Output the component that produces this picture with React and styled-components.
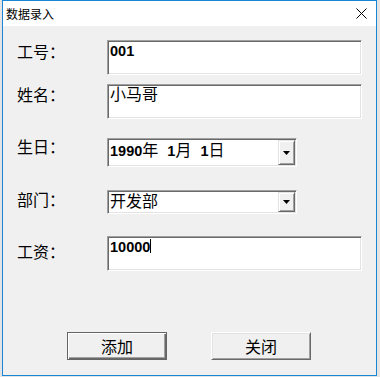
import React from 'react';
import styled, { createGlobalStyle } from 'styled-components';

const GlobalStyle = createGlobalStyle`
  html, body { margin: 0; padding: 0; background: #e4e4e4; }
  body { font-family: "Noto Sans CJK SC", sans-serif; color: #000; }
`;

const Window = styled.div`
  box-sizing: border-box;
  width: 375px;
  height: 376px;
  margin-left: 2px;
  border: 1px solid #1b84d5;
  display: flex;
  flex-direction: column;
  background: #f0f0f0;
`;

const TitleBar = styled.div`
  height: 25px;
  flex: none;
  background: #fff;
  display: flex;
  align-items: center;
  justify-content: space-between;
  padding: 0 9px 0 3px;
`;

const Title = styled.span`
  font-family: "Noto Sans CJK SC", sans-serif;
  font-size: 12px;
  line-height: 14px;
`;

const Content = styled.div`
  flex: 1;
  padding: 14px 0 0 14px;
  display: flex;
  flex-direction: column;
`;

const Form = styled.div`
  display: grid;
  grid-template-rows: 44px 54px 52px 46px auto;
`;

const Row = styled.div`
  display: flex;
  align-items: flex-start;
`;

const Label = styled.div`
  width: 90px;
  flex: none;
  font-family: "Noto Sans CJK SC", sans-serif;
  font-size: 16px;
  line-height: 18px;
  margin-top: ${p => p.$offset}px;
`;

const Field = styled.div`
  box-sizing: border-box;
  width: ${p => p.$w}px;
  height: ${p => p.$h}px;
  background: #fff;
  border-style: solid;
  border-width: 1px;
  border-color: #a0a0a0 #fff #fff #a0a0a0;
  box-shadow: inset 1px 1px 0 #696969, inset -1px -1px 0 #e3e3e3;
  padding: ${p => p.$pt}px 2px 0 2px;
  display: flex;
  align-items: flex-start;
  position: relative;
`;

const Combo = styled(Field)`
  padding: 1px;
`;

const Digits = styled.span`
  font-family: "Liberation Sans", Arial, sans-serif;
  font-weight: bold;
  font-size: 14.5px;
  line-height: 16px;
  white-space: pre;
`;

const Cjk = styled.span`
  font-family: "Noto Sans CJK SC", sans-serif;
  font-weight: normal;
  font-size: 16px;
  line-height: 16px;
`;

const Value = styled.div`
  flex: 1;
  padding: ${p => p.$pt}px 0 0 1px;
  font-family: "Liberation Sans", Arial, sans-serif;
  font-weight: bold;
  font-size: 14.5px;
  line-height: 16px;
  word-spacing: 5px;
  white-space: pre;
`;

const Caret = styled.span`
  display: inline-block;
  width: 1px;
  height: 14px;
  background: #000;
  vertical-align: -3px;
`;

const DropButton = styled.div`
  box-sizing: border-box;
  width: 17px;
  align-self: stretch;
  background: #f0f0f0;
  border: 1px solid;
  border-color: #e3e3e3 #696969 #696969 #e3e3e3;
  box-shadow: inset 1px 1px 0 #fff, inset -1px -1px 0 #a0a0a0;
  display: flex;
  align-items: center;
  justify-content: center;
`;

const ButtonRow = styled.div`
  display: flex;
  gap: 44px;
  padding-left: 50px;
  margin-top: 61px;
`;

const Button = styled.div`
  box-sizing: border-box;
  width: 100px;
  height: 28px;
  background: #f0f0f0;
  display: flex;
  align-items: center;
  justify-content: center;
  font-family: "Noto Sans CJK SC", sans-serif;
  font-size: 16px;
  line-height: 18px;
  border: 1px solid;
  border-color: ${p => (p.$default ? '#646464' : '#fff #696969 #696969 #fff')};
  box-shadow: ${p =>
    p.$default
      ? 'inset 1px 1px 0 #fff, inset -1px -1px 0 #696969, inset -2px -2px 0 #a0a0a0'
      : 'inset 1px 1px 0 #e3e3e3, inset -1px -1px 0 #a0a0a0'};
`;

const Arrow = () => (
  <svg width="7" height="4" viewBox="0 0 7 4">
    <polygon points="0,0 7,0 3.5,4" fill="#000" />
  </svg>
);

const CloseIcon = () => (
  <svg width="11" height="11" viewBox="0 0 11 11">
    <path d="M0.5 0.5 L10.5 10.5 M10.5 0.5 L0.5 10.5" stroke="#000" strokeWidth="1" fill="none" />
  </svg>
);

export default function App() {
  return (
    <>
      <GlobalStyle />
      <Window>
        <TitleBar>
          <Title>数据录入</Title>
          <CloseIcon />
        </TitleBar>
        <Content>
          <Form>
            <Row>
              <Label $offset={2}>工号：</Label>
              <Field $w={255} $h={35} $pt={2}>
                <Digits>001</Digits>
              </Field>
            </Row>
            <Row>
              <Label $offset={1}>姓名：</Label>
              <Field $w={255} $h={35} $pt={0}>
                <Cjk>小马哥</Cjk>
              </Field>
            </Row>
            <Row>
              <Label $offset={-1}>生日：</Label>
              <Combo $w={190} $h={29}>
                <Value $pt={1}>
                  1990<Cjk>年</Cjk> 1<Cjk>月</Cjk> 1<Cjk>日</Cjk>
                </Value>
                <DropButton>
                  <Arrow />
                </DropButton>
              </Combo>
            </Row>
            <Row>
              <Label $offset={0}>部门：</Label>
              <Combo $w={190} $h={24}>
                <Value $pt={0}>
                  <Cjk>开发部</Cjk>
                </Value>
                <DropButton>
                  <Arrow />
                </DropButton>
              </Combo>
            </Row>
            <Row>
              <Label $offset={6}>工资：</Label>
              <Field $w={255} $h={35} $pt={2}>
                <Digits>10000</Digits>
                <Caret />
              </Field>
            </Row>
          </Form>
          <ButtonRow>
            <Button $default>添加</Button>
            <Button>关闭</Button>
          </ButtonRow>
        </Content>
      </Window>
    </>
  );
}
